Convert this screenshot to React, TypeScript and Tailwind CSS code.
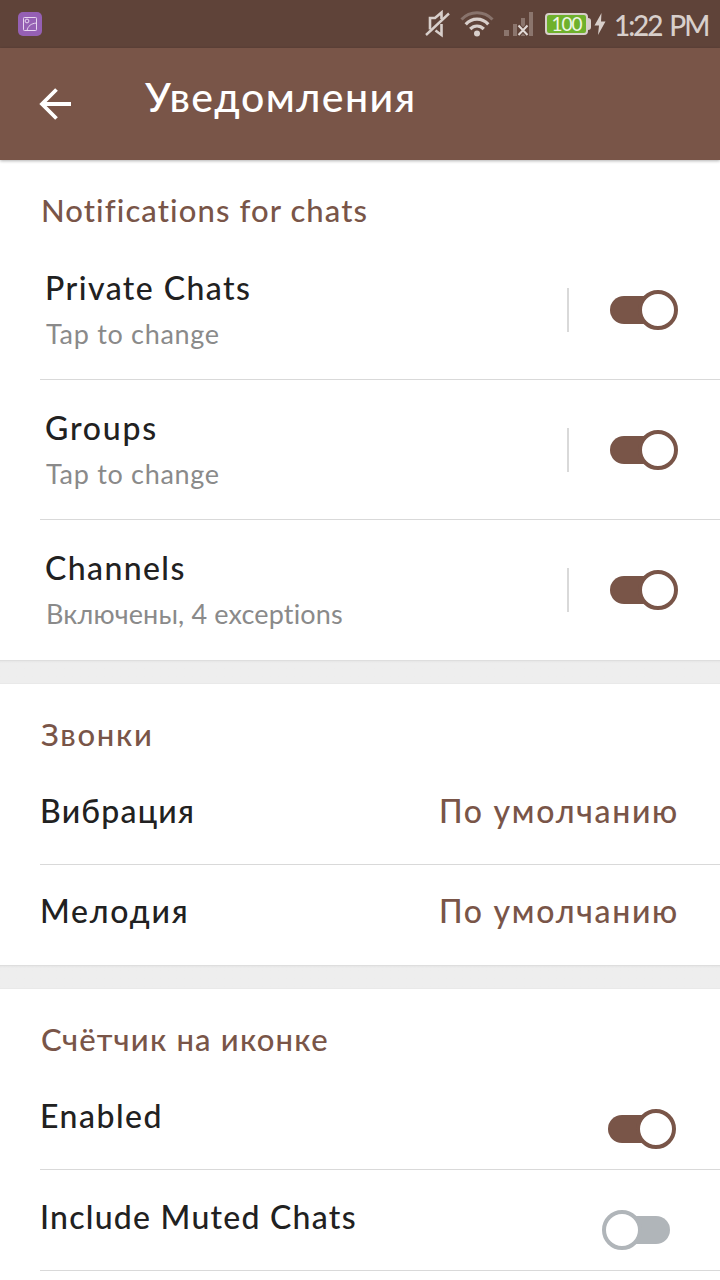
import React from "react";
import clsx from "clsx";

interface ToggleProps {
  on: boolean;
  className?: string;
}

const Toggle: React.FC<ToggleProps> = ({ on, className }) => (
  <div
    role="switch"
    aria-checked={on}
    className={clsx(
      "flex h-10 w-[68px] shrink-0 items-center",
      !on && "flex-row-reverse",
      className,
    )}
  >
    <div
      className={clsx(
        "h-7 w-12 shrink-0",
        on ? "-mr-5 rounded-l-full bg-[#795548]" : "-ml-5 rounded-r-full bg-[#b0b5b9]",
      )}
    />
    <div
      className={clsx(
        "z-10 size-10 shrink-0 rounded-full border-4 bg-white",
        on ? "border-[#795548]" : "border-[#b0b5b9]",
      )}
    />
  </div>
);

interface HeadingProps {
  text: string;
  className: string;
}

const Heading: React.FC<HeadingProps> = ({ text, className }) => (
  <h2 className="h-20 pt-[30px] pl-[41px] text-[31px] leading-10 font-medium text-[#795548]">
    <span className={className}>{text}</span>
  </h2>
);

interface ChatRowProps {
  title: string;
  subtitle: string;
  titleClass: string;
  subtitleClass: string;
  last?: boolean;
}

const ChatRow: React.FC<ChatRowProps> = ({
  title,
  subtitle,
  titleClass,
  subtitleClass,
  last,
}) => (
  <div
    className={clsx(
      "ml-10 flex h-[140px] pr-[42px] pl-[5px]",
      !last && "border-b border-[#d9d9d9]",
    )}
  >
    <div className="flex-1 pt-7">
      <p className="text-[32px] leading-10 font-medium text-[#212121]">
        <span className={titleClass}>{title}</span>
      </p>
      <p className="mt-2 pl-px text-[27px] leading-9 text-[#8a8a8a]">
        <span className={subtitleClass}>{subtitle}</span>
      </p>
    </div>
    <div className="mt-12 mr-[41px] h-11 w-0.5 bg-[#d9d9d9]" />
    <Toggle on className="mt-[50px]" />
  </div>
);

interface RowProps {
  title: string;
  titleClass: string;
  last?: boolean;
  children: React.ReactNode;
}

const Row: React.FC<RowProps> = ({ title, titleClass, last, children }) => (
  <div
    className={clsx(
      "ml-10 flex justify-between text-[32px] leading-10",
      last ? "h-[100px] pt-[26px]" : "h-[101px] border-b border-[#d9d9d9] pt-[27px]",
    )}
  >
    <p className="font-medium text-[#212121]">
      <span className={titleClass}>{title}</span>
    </p>
    {children}
  </div>
);

const DefaultValue: React.FC = () => (
  <p className="pr-[41px] font-medium text-[#795548]">
    <span className="tracking-[1.7px]">По умолчанию</span>
  </p>
);

const Divider: React.FC = () => (
  <div className="h-6 border-t border-b border-t-[#dedede] border-b-[#e9e9e9] bg-linear-to-b from-[#e6e6e6] to-[#eeeeee] to-10%" />
);

const StatusBar: React.FC = () => (
  <div className="flex h-12 items-center bg-[#5f4339] pr-3 pl-[18px] text-[#d8cfcb]">
    <svg className="size-6" viewBox="0 0 24 24" fill="none">
      <rect width="24" height="24" rx="5" fill="#9560b4" />
      <g stroke="#e6d5ef" strokeWidth="1">
        <rect x="5.5" y="5.5" width="13" height="13" rx="0.8" />
        <circle cx="9" cy="9" r="1.9" />
        <path d="M9 18.5C10 14 13 11.5 18.5 11" />
      </g>
    </svg>
    <svg className="ml-auto h-7 w-[25px]" viewBox="0 0 25 28" fill="none" stroke="currentColor">
      <path d="M5 19.5V8H10L16.5 2.5V9M10.5 20.5L16.5 25V14" strokeWidth="2.6" />
      <path d="M1 25L24 3.5" strokeWidth="2.4" />
    </svg>
    <svg className="ml-2.5 h-7 w-[34px]" viewBox="0 0 34 28" fill="none" stroke="currentColor">
      <path d="M1.5 9.5C10 0.5 24 0.5 32.5 9.5" strokeWidth="3" opacity="0.35" />
      <path d="M5.7 14.3C12 7.5 22 7.5 28.3 14.3" strokeWidth="3.2" />
      <path d="M10.2 19C14.2 15 19.8 15 23.8 19" strokeWidth="3.2" />
      <circle cx="17" cy="23.5" r="3" fill="currentColor" stroke="none" />
    </svg>
    <svg className="ml-2.5 h-7 w-[30px]" viewBox="0 0 30 28" fill="none">
      <g fill="#8b756d">
        <rect x="0" y="20" width="5" height="6" />
        <rect x="9" y="14" width="4" height="12" />
        <rect x="17" y="8" width="4" height="18" />
        <rect x="25" y="2" width="4" height="24" />
      </g>
      <path d="M14.5 15.5L23.5 25M23.5 15.5L14.5 25" stroke="#5f4339" strokeWidth="4" />
      <path d="M14.5 15.5L23.5 25M23.5 15.5L14.5 25" stroke="#e2dad7" strokeWidth="2" />
    </svg>
    <div className="ml-[11px] flex h-[22px] w-[43px] items-center justify-center rounded-[4px] border-2 border-[#d8cfcb] bg-[#6fb12c] pb-px text-[19px] leading-none tracking-[-1px] text-[#eef5e6]">
      100
    </div>
    <div className="h-3 w-[3px] rounded-r-sm bg-[#d8cfcb]" />
    <svg className="ml-[3px] h-6 w-3" viewBox="0 0 12 24" fill="currentColor">
      <path d="M7.5 1L0.5 13.5H5L4 23L11.5 9.5H7Z" />
    </svg>
    <span className="ml-2 w-[94px] pt-0.5 text-[28px] leading-none font-medium tracking-[-2.1px] whitespace-nowrap [word-spacing:3px]">
      1:22 PM
    </span>
  </div>
);

const App: React.FC = () => {
  return (
    <div className="h-[1280px] w-[720px] overflow-hidden bg-white font-['Lato','Noto_Sans',sans-serif]">
      <StatusBar />
      <header className="flex h-28 bg-[#795548] text-white shadow-[0_1px_3px_rgba(0,0,0,0.3)]">
        <svg
          className="mt-10 ml-[38px] h-8 w-[33px]"
          viewBox="0 0 33 32"
          fill="none"
          stroke="currentColor"
          strokeWidth="3.8"
        >
          <path d="M33 16H4M18.5 1.5L4 16L18.5 30.5" />
        </svg>
        <h1 className="mt-6 ml-[74px] text-[41px] leading-[50px] font-medium">
          <span className="tracking-[1.45px]">Уведомления</span>
        </h1>
      </header>

      <section>
        <Heading text="Notifications for chats" className="tracking-[1.1px]" />
        <ChatRow
          title="Private Chats"
          subtitle="Tap to change"
          titleClass="tracking-[1.45px]"
          subtitleClass="tracking-[0.7px]"
        />
        <ChatRow
          title="Groups"
          subtitle="Tap to change"
          titleClass="tracking-[1.8px]"
          subtitleClass="tracking-[0.7px]"
        />
        <ChatRow
          title="Channels"
          subtitle="Включены, 4 exceptions"
          titleClass="tracking-[1.4px]"
          subtitleClass="tracking-[0.15px]"
          last
        />
      </section>
      <Divider />

      <section>
        <Heading text="Звонки" className="tracking-[1.7px]" />
        <Row title="Вибрация" titleClass="tracking-[1.2px]">
          <DefaultValue />
        </Row>
        <Row title="Мелодия" titleClass="tracking-[1.75px]" last>
          <DefaultValue />
        </Row>
      </section>
      <Divider />

      <section>
        <Heading text="Счётчик на иконке" className="tracking-[1.2px]" />
        <Row title="Enabled" titleClass="tracking-[1.5px]">
          <Toggle on className="mt-[13px] mr-11" />
        </Row>
        <Row title="Include Muted Chats" titleClass="tracking-[1.25px]">
          <Toggle on={false} className="mt-[13px] mr-[50px]" />
        </Row>
      </section>
    </div>
  );
};

export default App;
